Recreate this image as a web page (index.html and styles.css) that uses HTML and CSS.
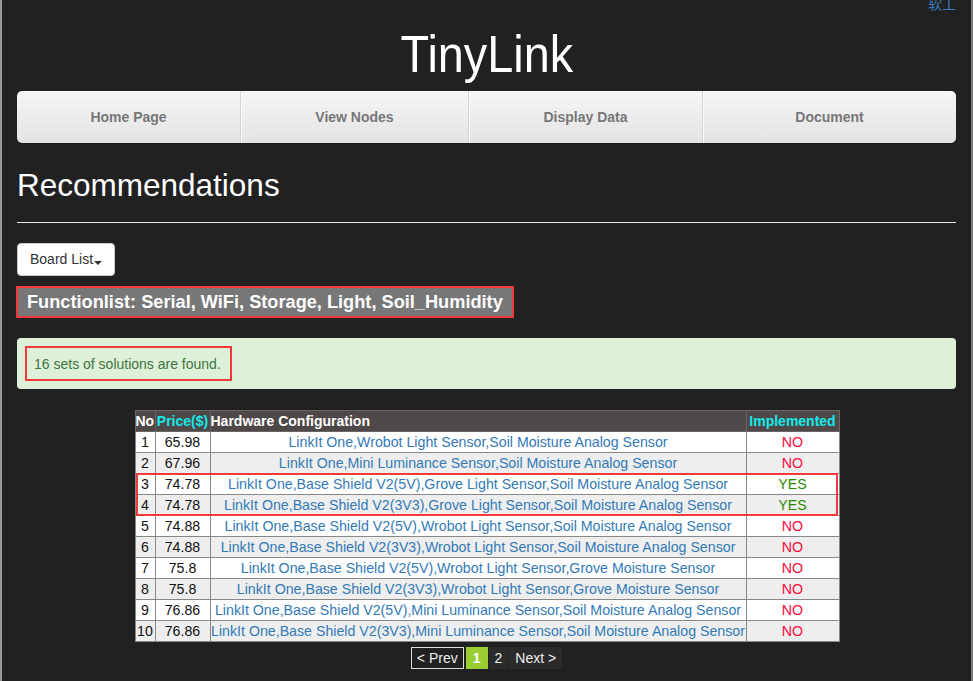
FILE: index.html
```html
<!DOCTYPE html>
<html>
<head>
<meta charset="utf-8">
<title>TinyLink</title>
<link rel="stylesheet" href="styles.css">
</head>
<body>
<div class="frame">
  <div class="container">
    <div class="toplink"><a href="#">软工</a></div>
    <h1 class="brand"><span>TinyLink</span></h1>
    <nav class="mainnav">
      <a href="#">Home Page</a>
      <a href="#">View Nodes</a>
      <a href="#">Display Data</a>
      <a href="#">Document</a>
    </nav>
    <h1 class="pagetitle">Recommendations</h1>
    <hr class="rule">
    <div class="boardrow"><button class="btn">Board List<span class="caret"></span></button></div>
    <div class="funcrow"><span class="funcbox"><span class="funclabel">Functionlist: Serial, WiFi, Storage, Light, Soil_Humidity</span></span></div>
    <div class="alert"><span class="alertbox">16 sets of solutions are found.</span></div>
    <div class="tablewrap">
      <table class="results">
        <colgroup><col class="c-no"><col class="c-price"><col class="c-hw"><col class="c-impl"></colgroup>
        <thead>
          <tr><th class="h-no">No</th><th class="cyan">Price($)</th><th class="h-hw">Hardware Configuration</th><th class="cyan">Implemented</th></tr>
        </thead>
        <tbody>
          <tr><td>1</td><td>65.98</td><td><a href="#">LinkIt One,Wrobot Light Sensor,Soil Moisture Analog Sensor</a></td><td class="no">NO</td></tr>
          <tr><td>2</td><td>67.96</td><td><a href="#">LinkIt One,Mini Luminance Sensor,Soil Moisture Analog Sensor</a></td><td class="no">NO</td></tr>
          <tr><td>3</td><td>74.78</td><td><a href="#">LinkIt One,Base Shield V2(5V),Grove Light Sensor,Soil Moisture Analog Sensor</a></td><td class="yes">YES</td></tr>
          <tr><td>4</td><td>74.78</td><td><a href="#">LinkIt One,Base Shield V2(3V3),Grove Light Sensor,Soil Moisture Analog Sensor</a></td><td class="yes">YES</td></tr>
          <tr><td>5</td><td>74.88</td><td><a href="#">LinkIt One,Base Shield V2(5V),Wrobot Light Sensor,Soil Moisture Analog Sensor</a></td><td class="no">NO</td></tr>
          <tr><td>6</td><td>74.88</td><td><a href="#">LinkIt One,Base Shield V2(3V3),Wrobot Light Sensor,Soil Moisture Analog Sensor</a></td><td class="no">NO</td></tr>
          <tr><td>7</td><td>75.8</td><td><a href="#">LinkIt One,Base Shield V2(5V),Wrobot Light Sensor,Grove Moisture Sensor</a></td><td class="no">NO</td></tr>
          <tr><td>8</td><td>75.8</td><td><a href="#">LinkIt One,Base Shield V2(3V3),Wrobot Light Sensor,Grove Moisture Sensor</a></td><td class="no">NO</td></tr>
          <tr><td>9</td><td>76.86</td><td><a href="#">LinkIt One,Base Shield V2(5V),Mini Luminance Sensor,Soil Moisture Analog Sensor</a></td><td class="no">NO</td></tr>
          <tr><td>10</td><td>76.86</td><td><a href="#">LinkIt One,Base Shield V2(3V3),Mini Luminance Sensor,Soil Moisture Analog Sensor</a></td><td class="no">NO</td></tr>
        </tbody>
      </table>
      <div class="highlight"></div>
    </div>
    <div class="pager">
      <a href="#" class="pg prev">&lt; Prev</a>
      <span class="pg current">1</span>
      <a href="#" class="pg">2</a>
      <a href="#" class="pg">Next &gt;</a>
    </div>
  </div>
</div>
</body>
</html>
```

FILE: styles.css
```css
html { background: #212121; }
body {
  margin: 0;
  font-family: "Liberation Sans", Arial, "Noto Sans CJK SC", sans-serif;
  font-size: 14px;
  color: #333;
}
a { text-decoration: none; color: #337ab7; }
.frame {
  display: flow-root;
  min-height: 100vh;
  background: #212121;
  border-left: 2px solid #9a9a9a;
  border-right: 2px solid #7a7a7a;
  box-sizing: border-box;
}
.container { padding: 0 15px; }
.toplink {
  text-align: right;
  line-height: 14px;
  margin-top: -4px;
  font-family: "Noto Sans CJK SC", sans-serif;
  font-size: 14px;
}
.toplink a { color: #3a7bbf; }
.brand {
  margin: 16px 0 0;
  text-align: center;
  font-weight: normal;
  font-size: 52px;
  line-height: 57px;
  color: #fff;
}
.brand span { display: inline-block; transform: scaleX(0.9); }
.mainnav {
  margin-top: 8px;
  display: grid;
  grid-template-columns: 223fr 228fr 234fr 254fr;
  height: 52px;
  border-radius: 5px;
  background: linear-gradient(#f6f6f6, #e3e3e3);
  box-shadow: 0 1px 1px rgba(0,0,0,0.2);
  overflow: hidden;
}
.mainnav a {
  display: flex;
  align-items: center;
  justify-content: center;
  font-weight: bold;
  font-size: 14px;
  color: #777;
  padding-top: 0;
}
.mainnav a + a { border-left: 1px solid #d2d2d2; box-shadow: inset 1px 0 0 #fafafa; }
.pagetitle {
  margin: 25px 0 0;
  font-weight: normal;
  font-size: 31.5px;
  line-height: 34px;
  color: #fff;
}
.rule {
  margin: 20px 0 0;
  border: 0;
  border-top: 1px solid #e6e6e6;
  height: 0;
}
.boardrow { margin-top: 20px; display: flex; }
.btn {
  font-family: inherit;
  font-size: 14px;
  line-height: 19px;
  color: #333;
  background: #fff;
  border: 1px solid #ccc;
  border-radius: 4px;
  padding: 6px 12px;
  display: flex;
  align-items: center;
}
.caret {
  display: inline-block;
  width: 0; height: 0;
  margin-left: 1px;
  margin-top: 6px;
  border-top: 4px solid #333;
  border-left: 4px solid transparent;
  border-right: 4px solid transparent;
}
.funcrow { margin-top: 10px; display: flex; margin-left: -1px; }
.funcbox { border: 2px solid #f23a3a; display: flex; }
.funclabel {
  background: #777;
  color: #fff;
  font-weight: bold;
  font-size: 18.2px;
  line-height: 28px;
  padding: 0 9px 0 9px;
}
.alert {
  margin-top: 20px;
  display: flex;
  background: #dff0d8;
  border-radius: 4px;
  padding: 8px;
}
.alertbox {
  border: 2px solid #f23a3a;
  padding: 6px 9px 5px 7px;
  line-height: 20px;
  color: #3c763d;
  font-size: 14px;
}
.tablewrap {
  position: relative;
  width: 704px;
  margin: 21px auto 0;
}
.results {
  border-collapse: collapse;
  table-layout: fixed;
  width: 704px;
  font-size: 14.2px;
}
.c-no { width: 20px; }
.c-price { width: 55px; }
.c-hw { width: 536px; }
.c-impl { width: 93px; }
.results th, .results td {
  border: 1px solid #888;
  padding: 0;
  line-height: 20px;
  text-align: center;
  white-space: nowrap;
  overflow: visible;
}
.results thead th {
  background: #4e4848;
  color: #fff;
  font-weight: bold;
  font-size: 14px;
  border-color: #6a6565;
}
.results th.h-no { text-align: left; }
.results th.h-hw { text-align: left; }
.results th.cyan { color: #14eaea; }
.results tbody tr:nth-child(odd) td { background: #fff; }
.results tbody tr:nth-child(even) td { background: #eee; }
.results td { color: #111; }
.results td a { color: #337ab7; }
.results td.no { color: #ff0a3c; }
.results td.yes { color: #2c8a00; }
.highlight {
  position: absolute;
  left: 1px;
  top: 63px;
  width: 702px;
  height: 43px;
  box-sizing: border-box;
  border: 2px solid #f23a3a;
  pointer-events: none;
}
.pager {
  margin-top: 5px;
  display: flex;
  justify-content: center;
  gap: 1px;
}
.pg {
  display: block;
  line-height: 22px;
  height: 22px;
  padding: 0 6px;
  background: #2b2b2b;
  color: #eee;
  font-size: 14px;
}
.pg.prev {
  background: transparent;
  border: 1px solid #ddd;
  line-height: 20px;
  height: 20px;
  padding: 0 5px;
  margin-right: 1px;
}
.pg.current {
  background: #9acd32;
  color: #fff;
  font-weight: bold;
  padding: 0 7px;
}
```
